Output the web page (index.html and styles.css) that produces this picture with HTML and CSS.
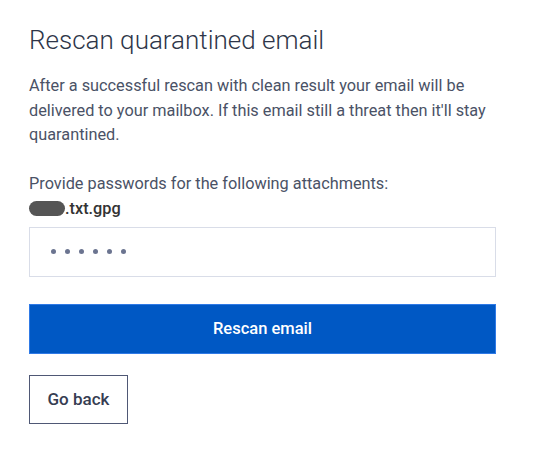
FILE: index.html
```html
<!DOCTYPE html>
<html>
<head>
<meta charset="utf-8">
<link rel="stylesheet" href="styles.css">
</head>
<body>
<main class="panel">
  <h1 class="title">Rescan quarantined email</h1>
  <p class="intro">After a successful rescan with clean result your email will be delivered to your mailbox. If this email still a threat then it'll stay quarantined.</p>
  <div class="field">
    <div class="label">Provide passwords for the following attachments:</div>
    <div class="filename"><span class="redacted"></span>.txt.gpg</div>
    <div class="input">
      <span class="dot"></span><span class="dot"></span><span class="dot"></span><span class="dot"></span><span class="dot"></span><span class="dot"></span>
    </div>
  </div>
  <button class="primary">Rescan email</button>
  <button class="secondary">Go back</button>
</main>
</body>
</html>
```

FILE: styles.css
```css
html, body {
  margin: 0;
  padding: 0;
  background: #ffffff;
}
body {
  font-family: Roboto, "Liberation Sans", sans-serif;
  color: #4a5266;
}
.panel {
  width: 467px;
  padding: 24px 0 0 29px;
  display: flex;
  flex-direction: column;
  align-items: flex-start;
}
.title {
  margin: 0;
  font-size: 26px;
  line-height: 32px;
  font-weight: 300;
  color: #2e3649;
}
.intro {
  margin: 18px 0 0;
  font-size: 16.3px;
  line-height: 24.5px;
  color: #4a5266;
}
.field {
  margin-top: 25px;
  width: 100%;
}
.label {
  font-size: 16.3px;
  line-height: 22px;
  color: #4a5266;
}
.filename {
  display: flex;
  align-items: center;
  font-size: 16.3px;
  line-height: 22px;
  font-weight: 500;
  color: #333333;
  margin-top: 3px;
}
.redacted {
  display: inline-block;
  width: 36px;
  height: 15px;
  border-radius: 8px;
  background: #555555;
}
.input {
  margin-top: 7px;
  box-sizing: border-box;
  height: 50px;
  width: 100%;
  border: 1px solid #d9dde8;
  display: flex;
  align-items: center;
  gap: 9px;
  padding-left: 21px;
}
.dot {
  width: 5px;
  height: 5px;
  border-radius: 50%;
  background: #6b7490;
}
button {
  font-family: Roboto, "Liberation Sans", sans-serif;
  cursor: pointer;
}
.primary {
  margin-top: 27px;
  width: 100%;
  height: 50px;
  border: 1px solid #2f7ae6;
  background: #0058c4;
  color: #ffffff;
  font-size: 16.5px;
  font-weight: 500;
}
.secondary {
  margin-top: 21px;
  width: 99px;
  height: 49px;
  border: 1px solid #4f5875;
  background: #ffffff;
  color: #363d52;
  font-size: 17px;
  font-weight: 500;
}
```
